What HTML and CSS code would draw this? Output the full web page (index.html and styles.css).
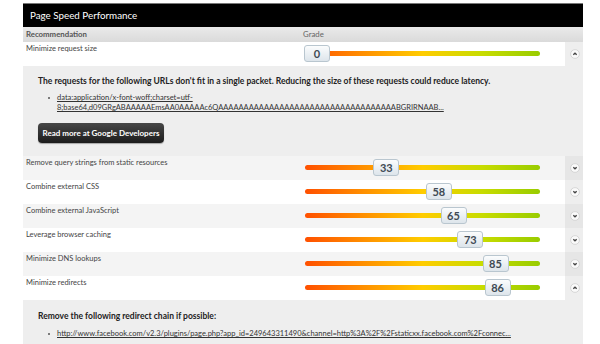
FILE: index.html
```html
<!DOCTYPE html>
<html>
<head>
<meta charset="utf-8">
<link rel="stylesheet" href="styles.css">
</head>
<body>
<div class="panel">
  <div class="title">Page Speed Performance</div>
  <div class="thead">
    <div class="th">Recommendation</div>
    <div class="th">Grade</div>
    <div class="th"></div>
  </div>

  <div class="row white">
    <div class="label">Minimize request size</div>
    <div class="grade"><div class="slider"><div class="track"></div><div class="badge" style="--p:0">0</div></div></div>
    <div class="toggle"><svg class="tg" viewBox="0 0 10 10"><circle cx="5" cy="5" r="4.4"/><polyline points="3.3,5.8 5,4.2 6.7,5.8"/></svg></div>
  </div>
  <div class="detail d1">
    <p class="lead">The requests for the following URLs don't fit in a single packet. Reducing the size of these requests could reduce latency.</p>
    <ul class="urls">
      <li><a href="#">data:application/x-font-woff;charset=utf-8;base64,d09GRgABAAAAAEmsAA0AAAAAc6QAAAAAAAAAAAAAAAAAAAAAAAAAAAAAAAAAAABGRIRNAAB...</a></li>
    </ul>
    <a class="btn" href="#">Read more at Google Developers</a>
  </div>

  <div class="row gray">
    <div class="label">Remove query strings from static resources</div>
    <div class="grade"><div class="slider"><div class="track"></div><div class="badge" style="--p:33">33</div></div></div>
    <div class="toggle"><svg class="tg" viewBox="0 0 10 10"><circle cx="5" cy="5" r="4.4"/><polyline points="3.3,4.2 5,5.8 6.7,4.2"/></svg></div>
  </div>
  <div class="row white">
    <div class="label">Combine external CSS</div>
    <div class="grade"><div class="slider"><div class="track"></div><div class="badge" style="--p:58">58</div></div></div>
    <div class="toggle"><svg class="tg" viewBox="0 0 10 10"><circle cx="5" cy="5" r="4.4"/><polyline points="3.3,4.2 5,5.8 6.7,4.2"/></svg></div>
  </div>
  <div class="row gray">
    <div class="label">Combine external JavaScript</div>
    <div class="grade"><div class="slider"><div class="track"></div><div class="badge" style="--p:65">65</div></div></div>
    <div class="toggle"><svg class="tg" viewBox="0 0 10 10"><circle cx="5" cy="5" r="4.4"/><polyline points="3.3,4.2 5,5.8 6.7,4.2"/></svg></div>
  </div>
  <div class="row white">
    <div class="label">Leverage browser caching</div>
    <div class="grade"><div class="slider"><div class="track"></div><div class="badge" style="--p:73">73</div></div></div>
    <div class="toggle"><svg class="tg" viewBox="0 0 10 10"><circle cx="5" cy="5" r="4.4"/><polyline points="3.3,4.2 5,5.8 6.7,4.2"/></svg></div>
  </div>
  <div class="row gray">
    <div class="label">Minimize DNS lookups</div>
    <div class="grade"><div class="slider"><div class="track"></div><div class="badge" style="--p:85">85</div></div></div>
    <div class="toggle"><svg class="tg" viewBox="0 0 10 10"><circle cx="5" cy="5" r="4.4"/><polyline points="3.3,4.2 5,5.8 6.7,4.2"/></svg></div>
  </div>
  <div class="row white">
    <div class="label">Minimize redirects</div>
    <div class="grade"><div class="slider"><div class="track"></div><div class="badge" style="--p:86">86</div></div></div>
    <div class="toggle"><svg class="tg" viewBox="0 0 10 10"><circle cx="5" cy="5" r="4.4"/><polyline points="3.3,5.8 5,4.2 6.7,5.8"/></svg></div>
  </div>
  <div class="detail d2">
    <p class="lead">Remove the following redirect chain if possible:</p>
    <ul class="urls">
      <li><a href="#">http://www.facebook.com/v2.3/plugins/page.php?app_id=249643311490&amp;channel=http%3A%2F%2Fstaticxx.facebook.com%2Fconnec...</a></li>
    </ul>
  </div>
</div>
</body>
</html>
```

FILE: styles.css
```css
* { box-sizing: border-box; }
html, body { margin: 0; padding: 0; background: #fff; }
body {
  font-family: Lato, "Open Sans", "Liberation Sans", sans-serif;
  color: #444;
  overflow: hidden;
}
.panel {
  width: 560px;
  margin: 3px 0 0 23px;
}
.title {
  height: 24px;
  background: #000;
  border-top: 1px solid #777;
  color: #fff;
  font-size: 9.8px;
  line-height: 23px;
  padding-left: 7px;
}
.thead {
  display: grid;
  grid-template-columns: 277px 1fr 18px;
  height: 15px;
  background: linear-gradient(#eaeaea, #dadada);
}
.th {
  font-size: 7.8px;
  font-weight: bold;
  color: #555;
  line-height: 15px;
  padding-left: 3px;
}
.th:nth-child(2) { padding-left: 3px; font-weight: normal; color: #666; }
.row {
  display: grid;
  grid-template-columns: 277px 1fr 18px;
  height: 24px;
}
.row.white .label, .row.white .grade { background: #fff; }
.row.white .toggle { background: #eeeeee; }
.row.gray .label, .row.gray .grade { background: #f4f4f4; }
.row.gray .toggle { background: #e6e6e6; }
.label {
  font-size: 7.5px;
  line-height: 10px;
  padding: 2px 3px;
  color: #444;
}
.grade { position: relative; }
.slider {
  position: relative;
  margin-left: 4px;
  width: 236px;
  height: 24px;
}
.track {
  position: absolute;
  left: 1px;
  right: 0;
  top: 9px;
  height: 5px;
  border-radius: 3px;
  background: linear-gradient(to right, #ff5000 0%, #ff9000 25%, #ffcc00 50%, #c8dc00 75%, #99cc00 100%);
}
.badge {
  position: absolute;
  top: 3px;
  left: calc((100% - 26px) * var(--p) / 100);
  width: 26px;
  height: 17px;
  border: 1px solid #b9c6cf;
  border-radius: 3px;
  background: linear-gradient(#fbfcfd, #dde5eb);
  color: #3f4a54;
  font-size: 11px;
  font-weight: bold;
  text-align: center;
  line-height: 15px;
}
.toggle {
  display: flex;
  align-items: center;
  justify-content: center;
}
.tg {
  width: 10px;
  height: 10px;
  margin-left: 1px;
}
.tg circle { fill: #fafafa; stroke: #cfcfcf; stroke-width: 0.8; }
.tg polyline { fill: none; stroke: #444; stroke-width: 1.3; }
.detail {
  background: #eeeeee;
  padding: 10px 15px 0 15px;
}
.d1 { height: 90px; }
.d2 { height: 50px; padding-top: 11px; }
.lead {
  margin: 0;
  font-size: 8.5px;
  line-height: 10px;
  font-weight: bold;
  color: #222;
}
.urls {
  margin: 7px 0 0 0;
  padding: 0 0 0 19px;
  max-width: 480px;
  font-size: 7.5px;
  line-height: 10px;
  list-style: none;
}
.urls li { position: relative; }
.urls li::before {
  content: "";
  position: absolute;
  left: -9px;
  top: 4px;
  width: 2px;
  height: 2px;
  background: #555;
  border-radius: 1px;
}
.urls a { color: #333; text-decoration: underline; }
.d2 .urls { margin-top: 8px; }
.btn {
  display: inline-block;
  margin-top: 10px;
  width: 126px;
  height: 20px;
  line-height: 20px;
  text-align: center;
  border-radius: 4px;
  background: linear-gradient(#474747, #1c1c1c);
  box-shadow: 0 1px 1px rgba(0,0,0,0.3);
  color: #fff;
  font-size: 8px;
  font-weight: bold;
  text-decoration: none;
}
```
